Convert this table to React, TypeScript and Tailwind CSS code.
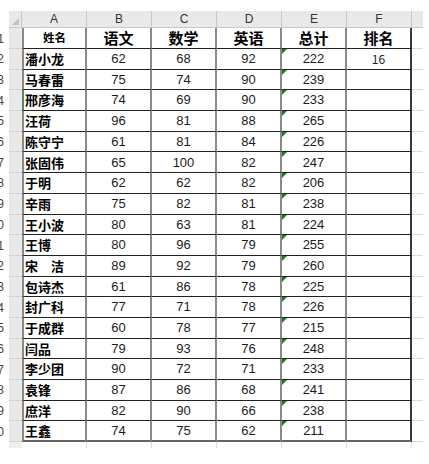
import React from "react";

const rows: [string, number, number, number, number, string][] = [
  ["潘小龙", 62, 68, 92, 222, "16"],
  ["马春雷", 75, 74, 90, 239, ""],
  ["邢彦海", 74, 69, 90, 233, ""],
  ["汪荷", 96, 81, 88, 265, ""],
  ["陈守宁", 61, 81, 84, 226, ""],
  ["张固伟", 65, 100, 82, 247, ""],
  ["于明", 62, 62, 82, 206, ""],
  ["辛雨", 75, 82, 81, 238, ""],
  ["王小波", 80, 63, 81, 224, ""],
  ["王博", 80, 96, 79, 255, ""],
  ["宋\u3000洁", 89, 92, 79, 260, ""],
  ["包诗杰", 61, 86, 78, 225, ""],
  ["封广科", 77, 71, 78, 226, ""],
  ["于成群", 60, 78, 77, 215, ""],
  ["闫品", 79, 93, 76, 248, ""],
  ["李少团", 90, 72, 71, 233, ""],
  ["袁锋", 87, 86, 68, 241, ""],
  ["庶洋", 82, 90, 66, 238, ""],
  ["王鑫", 74, 75, 62, 211, ""],
];

const cjk = { fontFamily: '"Noto Sans CJK SC", "Noto Sans", sans-serif' };
const num = { fontFamily: '"Liberation Sans", Arial, sans-serif' };

function RowHead({ n, green }: { n: number; green?: boolean }) {
  return (
    <div className="flex h-full w-[22px] shrink-0">
      <div
        className="flex h-full w-[9px] items-center justify-end overflow-hidden bg-white pr-[5px] text-[12px] text-[#444]"
        style={num}
      >
        <span className="shrink-0">{n}</span>
      </div>
      <div
        className={
          "h-full w-[13px] border-b border-[#d4d4d4] bg-[#e9e9e9] " +
          (green ? "border-r border-r-[#217346]" : "")
        }
      />
    </div>
  );
}

function Tail() {
  return <div className="h-full w-[11px] shrink-0 border-b border-[#d9d9d9]" />;
}

export default function App() {
  const colLetters = ["A", "B", "C", "D", "E", "F"];
  return (
    <div className="relative h-[464px] w-[429px] overflow-hidden bg-white pt-[11px]">
      <div className="flex h-[17px]">
        <div className="flex h-full w-[22px] shrink-0">
          <div className="h-full w-[9px] bg-white" />
          <div className="relative h-full w-[13px] border-b border-r border-[#c8c8c8] bg-[#e9e9e9]">
            <div className="absolute bottom-[2px] right-[2px] h-0 w-0 border-b-[7px] border-l-[7px] border-b-[#c2c2c2] border-l-transparent" />
          </div>
        </div>
        {colLetters.map((c) => (
          <div
            key={c}
            className="flex h-full w-[65px] shrink-0 items-center justify-center border-b border-r border-[#c8c8c8] bg-[#e9e9e9] text-[12px] text-[#333]"
            style={num}
          >
            {c}
          </div>
        ))}
        <div className="h-full w-[11px] shrink-0 border-b border-[#c8c8c8] bg-[#e9e9e9]" />
      </div>

      <div className="flex h-[21px]">
        <RowHead n={1} />
        <div
          className="flex h-full w-[65px] shrink-0 items-center justify-center border-b border-l-2 border-r-2 border-b-[#222] border-l-[#8a8a8a] border-r-[#8a8a8a] text-[11.5px] font-bold text-black"
          style={cjk}
        >
          姓名
        </div>
        {["语文", "数学", "英语", "总计", "排名"].map((h, i) => (
          <div
            key={h}
            className={
              "flex h-full w-[65px] shrink-0 items-center justify-center border-b border-r-2 border-b-[#222] text-[15px] font-bold text-black " +
              (i === 4 ? "border-r-[#3a3a3a]" : "border-r-[#8a8a8a]")
            }
            style={cjk}
          >
            {h}
          </div>
        ))}
        <Tail />
      </div>

      {rows.map((r, idx) => (
        <div key={idx} className="flex h-[20.7px]">
          <RowHead n={idx + 2} />
          <div
            className={
              "flex h-full w-[65px] shrink-0 items-center border-l-2 border-r-2 border-r-[#8a8a8a] pl-[1px] text-[13px] font-bold text-black " +
              (idx === 18 ? "border-b-2 border-b-[#666] " : "border-b border-b-[#222] ") +
              (idx === 2 ? "border-l-[#4f8f5f]" : "border-l-[#8a8a8a]")
            }
            style={cjk}
          >
            {r[0]}
          </div>
          {[r[1], r[2], r[3], r[4]].map((v, j) => (
            <div
              key={j}
              className={
                "relative flex h-full w-[65px] shrink-0 items-center justify-center border-r-2 border-r-[#8a8a8a] text-[13px] text-[#1c1c1c] " +
                (idx === 18 ? "border-b-2 border-b-[#666]" : "border-b border-b-[#222]")
              }
              style={num}
            >
              {j === 3 && (
                <div className="absolute left-0 top-0 h-0 w-0 border-r-[5px] border-t-[5px] border-r-transparent border-t-[#1e7d1e]" />
              )}
              {v}
            </div>
          ))}
          <div
            className={
              "flex h-full w-[65px] shrink-0 items-center justify-center border-r-2 border-r-[#3a3a3a] text-[12px] text-[#1c1c1c] " +
              (idx === 18 ? "border-b-2 border-b-[#666]" : "border-b border-b-[#222]")
            }
            style={cjk}
          >
            {r[5]}
          </div>
          <Tail />
        </div>
      ))}

      <div className="flex h-[6px]">
        <div className="flex h-full w-[22px] shrink-0">
          <div className="h-full w-[9px]" />
          <div className="h-full w-[13px] bg-[#efefef]" />
        </div>
        {colLetters.map((c) => (
          <div key={c} className="h-full w-[65px] shrink-0 border-r border-[#dcdcdc]" />
        ))}
      </div>
    </div>
  );
}
